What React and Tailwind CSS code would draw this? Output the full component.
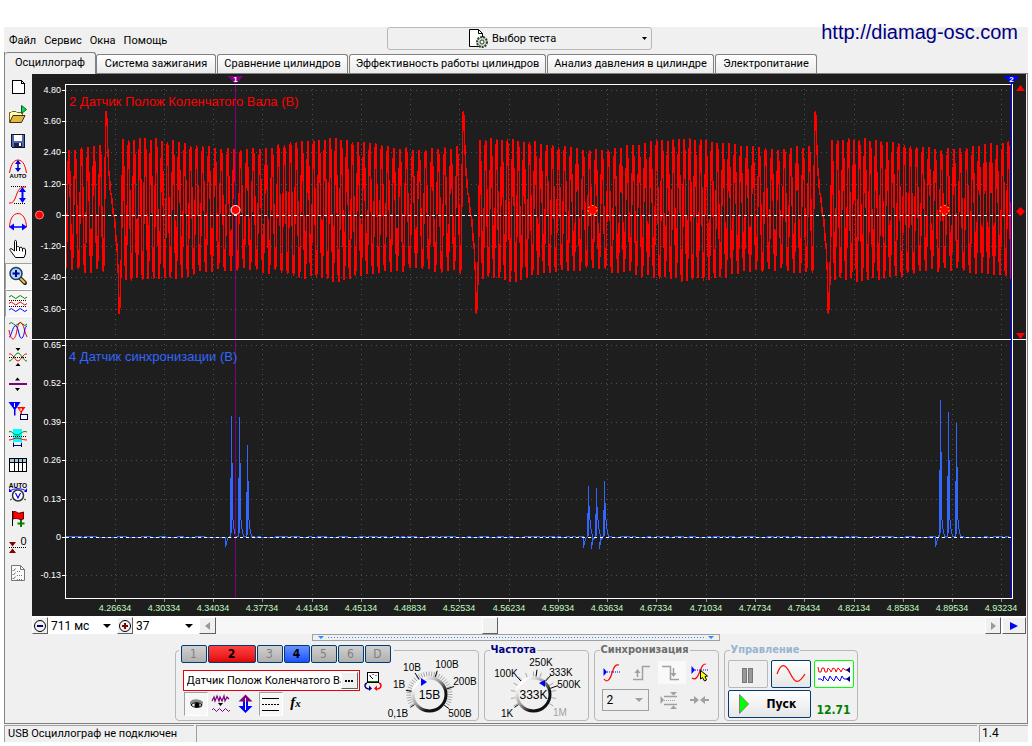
import React from "react";

/* ---------- signal data ---------- */
const ZERO1 = 215;
const ZERO2 = 537;

function noise(n) {
  const v = Math.sin(n * 12.9898 + 4.1) * 43758.5453;
  return v - Math.floor(v) - 0.5;
}

// Crankshaft sensor: 58 teeth per revolution followed by a two-tooth gap.
function crankPoints() {
  const spikes = [-247, 106.3, 463.4, 815.4, 1167];
  const pts = [];
  for (let r = 0; r < 4; r++) {
    const s = spikes[r];
    const e = spikes[r + 1];
    pts.push([s, 111], [s + 0.8, 122], [s + 1.6, 152], [s + 2.8, 175], [s + 4.5, 193], [s + 7.6, 215], [s + 10.5, 243]);
    pts.push([s + 11.6, 265], [s + 13, 313], [s + 14, 298], [s + 14.8, 262]);
    const start = s + 16.6;
    const weights = [];
    let sum = 0;
    for (let k = 0; k < 57; k++) {
      const w = 1 - 0.075 * Math.cos((2 * Math.PI * (k - 35)) / 31);
      weights.push(w);
      sum += w;
    }
    let x = start;
    for (let k = 0; k < 57; k++) {
      const step = (weights[k] / sum) * (e - start);
      const c = Math.cos((2 * Math.PI * (k - 35)) / 31);
      pts.push([x, 144 - c * 5 + noise(k + r * 70) * 3]);
      pts.push([x + step * 0.52, 274 + c * 5 + noise(k * 3 + r * 90) * 5]);
      x += step;
    }
  }
  return pts;
}

function crankPath() {
  const pts = crankPoints();
  let i = 0;
  const at = (x) => {
    while (i > 0 && pts[i][0] > x) i--;
    while (pts[i + 1][0] < x) i++;
    const [x0, y0] = pts[i];
    const [x1, y1] = pts[i + 1];
    const t = (x - x0) / (x1 - x0);
    return y0 + (y1 - y0) * ((1 - Math.cos(Math.PI * t)) / 2);
  };
  let d = "";
  for (let x = 66; x < 1011; x++) {
    let lo = 999;
    let hi = 0;
    for (let u = -0.25; u <= 1.25; u += 0.1) {
      const y = at(x + u);
      lo = Math.min(lo, y);
      hi = Math.max(hi, y);
    }
    d += `M${x + 0.5} ${Math.round(lo)}V${Math.round(hi) + 1}`;
  }
  return d;
}

function syncPath() {
  const pulse = (x, top) => [
    [x - 1.5, 537], [x - 1, 478 + (top - 416) * 0.5], [x - 0.5, 537], [x, top], [x + 0.6, 537 - (537 - top) * 0.55],
    [x + 1, 537 - (537 - top) * 0.5], [x + 1.5, 520], [x + 2.5, 529], [x + 4, 536],
  ];
  const groups = [
    [[225.5, 547], [231.5, 416], [239.5, 417], [247.5, 445]],
    [[583.5, 548], [588.5, 486], [596.5, 488], [604.5, 481]],
    [[935.5, 547], [940.5, 400], [948.5, 412], [956.5, 423]],
  ];
  let d = "M66 537.5";
  let x = 66;
  groups.forEach(([dip, ...pulses], g) => {
    for (; x < dip[0] - 3; x += 3) d += `V${noise(x) > 0.05 ? 536.5 : 537.5}H${x + 3}`;
    d += `H${dip[0]}V${dip[1]}L${dip[0] + 1} 543L${dip[0] + 2} 538.5`;
    pulses.forEach(([px, top]) => {
      if (g === 1 && px > 590) d += `L${px - 5} 549L${px - 4} 541`;
      pulse(px, top).forEach(([a, b]) => {
        d += `L${a} ${b}`;
      });
    });
    x = Math.round(pulses[2][0]) + 9;
    d += `L${x} 537.5`;
  });
  for (; x < 1010; x += 3) d += `V${noise(x) > 0.05 ? 536.5 : 537.5}H${x + 3}`;
  return d;
}

const CRANK = crankPath();
const SYNC = syncPath();
const ROWS1 = [["4.80", 90], ["3.60", 121], ["2.40", 152], ["1.20", 184], ["0", 215], ["-1.20", 246], ["-2.40", 277], ["-3.60", 309]];
const ROWS2 = [["0.65", 345], ["0.52", 383], ["0.39", 422], ["0.26", 460], ["0.13", 499], ["0", 537], ["-0.13", 575]];
const TIMES = Array.from({ length: 19 }, (_, i) => [(4.26634 + i * 0.037).toFixed(5), Math.round(114.5 + i * 49.27)]);

function Scope() {
  return (
    <svg viewBox="32 74 994 542" className="block h-auto w-full bg-[#1e1e1e]" fontFamily="'Liberation Sans', Arial, sans-serif" shapeRendering="crispEdges" role="img" aria-label="Осциллограмма">
      <rect x="32" y="74" width="994" height="542" fill="#1e1e1e" />
      <g stroke="#505050" strokeWidth="1" strokeDasharray="1 4">
        {[...ROWS1, ...ROWS2].map(([t, y]) => (
          <path key={t + y} d={`M66 ${y + 0.5}H1011`} />
        ))}
        {TIMES.map(([t, x]) => (
          <path key={t} d={`M${x + 0.5} 89V338M${x + 0.5} 344V597`} />
        ))}
      </g>
      <g stroke="#fff">
        {[...ROWS1, ...ROWS2].map(([t, y]) => (
          <path key={t + y} d={`M62 ${y + 0.5}H65`} />
        ))}
      </g>
      <g stroke="#909090">
        {TIMES.map(([t, x]) => (
          <path key={t} d={`M${x + 0.5} 599V602`} />
        ))}
      </g>
      <g fill="#fff" fontSize="9" textAnchor="end">
        {[...ROWS1, ...ROWS2].map(([t, y]) => (
          <text key={t + y} x="61" y={y + 3}>{t}</text>
        ))}
      </g>
      <g fill="#c0ffc0" fontSize="9" textAnchor="middle">
        {TIMES.map(([t, x]) => (
          <text key={t} x={x} y="611">{t}</text>
        ))}
      </g>
      <path d={CRANK} stroke="#f00" fill="none" />
      <path d={SYNC} stroke="#3366ff" fill="none" />
      <path d="M235.5 83V598" stroke="#800080" />
      <path d={`M66 ${ZERO1 + 0.5}H1011`} stroke="#fff" strokeDasharray="3 3" />
      <path d={`M66 ${ZERO2 + 0.5}H1011`} stroke="#fff" strokeDasharray="3 3" />
      <path d="M65.5 84V598.5H1012.5V84M65 84.5H1013M32 339.5H1026" stroke="#fff" fill="none" />
      <path d="M1011.5 83V598" stroke="#00f" />
      <path d="M228 76H243L235.5 84Z" fill="#800080" />
      <path d="M1004 76H1019L1011.5 84Z" fill="#00f" />
      <g fill="#fff" fontSize="8" fontWeight="bold" textAnchor="middle">
        <text x="235.5" y="82">1</text>
        <text x="1011.5" y="82">2</text>
      </g>
      <text x="69" y="106" fill="#f00" fontSize="13">2 Датчик Полож Коленчатого Вала (В)</text>
      <text x="69" y="361" fill="#3366ff" fontSize="13">4 Датчик синхронизации (В)</text>
      <g shapeRendering="auto" fill="#f00">
        <circle cx="39.5" cy="215" r="4" stroke="#ff8080" />
        <circle cx="235.5" cy="210" r="4.5" stroke="#fff" />
        {[592.5, 944.5].map((x) => (
          <g key={x}>
            <circle cx={x} cy="210" r="5" />
            <circle cx={x} cy="210" r="4.5" fill="none" stroke="#ff0" strokeDasharray="1.500 2.500" />
          </g>
        ))}
        <path d="M1016 91L1020.5 85L1025 91ZM1016 333L1020.5 339L1025 333ZM1020.5 207L1025 211.5L1020.5 216L1016 211.5Z" />
      </g>
    </svg>
  );
}

/* ---------- toolbar icons, 20x20 ---------- */
const Svg = ({ w = 20, h = 20, children, crisp }) => (
  <svg width={w} height={h} viewBox={`0 0 ${w} ${h}`} fill="none" className="block shrink-0" shapeRendering={crisp ? "crispEdges" : "auto"} aria-hidden="true">
    {children}
  </svg>
);
const wave = (y, a, x0 = 1, n = 3, w = 6) => {
  let d = `M${x0} ${y}`;
  for (let i = 0; i < n; i++) d += `q${w / 4} ${-a * 2} ${w / 2} 0t${w / 2} 0`;
  return d;
};

const TOOLS = [
  ["Новый", <Svg crisp><path d="M4.5 3.5H13.5L16.5 6.5V16.5H4.5Z" fill="#fff" stroke="#000" /><path d="M13.5 3.5V6.5H16.5" stroke="#000" /></Svg>],
  ["Открыть", <Svg><path d="M1.5 18V8.500H3L4 7.500H8L9 8.500H14.500V11" fill="#ffffb0" stroke="#806020" /><path d="M1.500 18.500L5 11.500H17L13.500 18.500Z" fill="#e0b840" stroke="#403010" /><path d="M13.500 1.500L18.500 5.500L13.500 9.500Z" fill="#00e050" stroke="#006020" /></Svg>],
  ["Сохранить", <Svg crisp><path d="M3.500 3.500H16.500V16.500H4.500L3.500 15.500Z" fill="#5068b0" stroke="#101030" /><rect x="6" y="4" width="8" height="6" fill="#fff" /><rect x="6" y="12" width="8" height="4" fill="#20204a" /><rect x="11" y="12" width="2" height="3" fill="#fff" /></Svg>],
  ["Авто амплитуда", <Svg><path d="M1.500 15C2.500 10 4 2 10 2S17.500 10 18.500 15" stroke="#f00" /><path d="M10 3V13" stroke="#0000d0" strokeWidth="1.500" /><path d="M7 6L10 2L13 6ZM7 10L10 14L13 10Z" fill="#0000d0" /><text x="10" y="20" fontSize="6" fontWeight="bold" fontFamily="Liberation Sans, sans-serif" textAnchor="middle" fill="#000">AUTO</text></Svg>],
  ["Размах", <Svg><path d="M3 1.500H18M6 18.500H18" stroke="#000" strokeDasharray="1 1" shapeRendering="crispEdges" /><path d="M1 18C9 20 7 3 15 2H18" stroke="#f00" /><path d="M14.500 4V16" stroke="#0000ff" strokeWidth="2" /><path d="M11 7L14.500 2L18 7ZM11 13L14.500 18L18 13Z" fill="#00f" /></Svg>],
  ["Период", <Svg><path d="M1.500 15C2 7 5 1.500 10 1.500S18 7 18.500 15" stroke="#f00" /><path d="M4 15H16" stroke="#00f" strokeWidth="1.500" /><path d="M6 11.500L1 15L6 18.500ZM14 11.500L19 15L14 18.500Z" fill="#00f" /></Svg>],
  ["Рука", <Svg><path d="M7.500 18.500L3 12.500C1 10 2 9 4 10L6.500 12V2.500C6.500 1 8.500 1 8.500 2.500V8.500C8.500 7 11.500 7 11.500 9C12 7.500 14.500 8 14.500 10C15 8.500 17.500 9 17.500 11V15L16 18.500Z" fill="#fff" stroke="#000" /><path d="M11.500 9V12M14.500 10V12.500M8.500 8V12" stroke="#000" /></Svg>],
  ["Лупа", <Svg><path d="M12 12L17 17" stroke="#302000" strokeWidth="4" strokeLinecap="round" /><path d="M12 12L17 17" stroke="#e0c060" strokeWidth="2" /><circle cx="8" cy="7.500" r="6" fill="#a8d8ff" stroke="#203858" strokeWidth="1.500" /><path d="M8 4V11M4.500 7.500H11.500" stroke="#000090" strokeWidth="2" /></Svg>],
  ["Раздельно", <Svg><path d={wave(4, 1.5, 1, 2, 9)} stroke="#008000" /><path d={wave(10.5, 1.5, 1, 2, 9)} stroke="#f00" /><path d={wave(17, 1.5, 1, 2, 9)} stroke="#00f" /><path d="M1 7.500H19M1 13.500H19" stroke="#000" strokeDasharray="1 1" shapeRendering="crispEdges" /></Svg>],
  ["Совместно", <Svg><path d={wave(4, 1.5, 1, 2, 9)} stroke="#008000" /><path d="M1 10C3 22 7 22 9 10S15 2 17 12L19 17" stroke="#f00" /><path d="M1 17C3 18 5 4 8 6S11 20 14 18S16 6 19 6" stroke="#00f" /></Svg>],
  ["Центрировать", <Svg><path d="M1 7C5 6 7 14 10 14S15 6 19 7" stroke="#f00" /><path d="M1 14C5 14 7 6 10 6S15 14 19 14" stroke="#008000" /><path d="M1 10.500H19" stroke="#000" strokeDasharray="1 1" shapeRendering="crispEdges" /><path d="M7.500 1H12.500L10 4ZM7.500 19H12.500L10 16Z" fill="#000" /></Svg>],
  ["Разделитель", <Svg><path d="M1 10H19" stroke="#800080" strokeWidth="2" /><path d="M7 6.500H12L9.500 3.500ZM7 14H12L9.500 17Z" fill="#000" /></Svg>],
  ["Маркеры", <Svg><path d="M9 6H17.500L14 11V16H12.500V11Z" fill="#f00" /><path d="M0.500 1H12.500L7.500 8.500V14.500H6V8.500Z" fill="#0000ff" /><path d="M6.500 2V6M11.500 8H14L12.500 10" stroke="#fff" /><rect x="12.500" y="13.500" width="7" height="5" fill="#fff" stroke="#000060" /></Svg>],
  ["Окно измерения", <Svg><rect x="5" y="1" width="9" height="13" fill="#00ffff" /><path d="M5.500 14V19M13.500 14V19" stroke="#00e0e0" /><path d="M1 4C4 2 5 7 9 7S14 2 19 4" stroke="#008000" /><path d="M1 12C4 12 6 10 9 10S14 12 19 12" stroke="#f00" /><path d="M1 8.500H19" stroke="#000" strokeDasharray="1 1" shapeRendering="crispEdges" /><path d="M5.500 15V19M13.500 15V19M6 17.500H13" stroke="#000080" /></Svg>],
  ["Таблица", <Svg crisp><rect x="1.500" y="3.500" width="17" height="13" fill="#fff" stroke="#000" /><rect x="2" y="4" width="16" height="3" fill="#99c8e8" /><path d="M2 7.500H18M6.500 4V16M10.500 4V16M14.500 4V16" stroke="#000" /></Svg>],
  ["Авто развёртка", <Svg><text x="10" y="5.500" fontSize="6.500" fontWeight="bold" fontFamily="Liberation Sans, sans-serif" textAnchor="middle" fill="#000">AUTO</text><path d="M2 9C6 6 14 6 18 9" stroke="#00f" /><path d="M1 6V10H4ZM19 6V10H16Z" fill="#00f" /><circle cx="10" cy="13.500" r="5.500" fill="#fff" stroke="#333" strokeWidth="1.500" /><path d="M7.500 11L10 16L12.500 11" stroke="#00f" strokeWidth="1.200" /><path d="M2 18L4 17M18 18L16 17" stroke="#333" /></Svg>],
  ["Добавить метку", <Svg><path d="M4.500 2V17" stroke="#000" /><path d="M5 3C8 1 9 5 12 4L15.500 3V10C12 12 10 8 5 10Z" fill="#f00" stroke="#600000" /><path d="M13 11V18M9.500 14.500H16.500" stroke="#008000" strokeWidth="2" /></Svg>],
  ["Обнулить", <Svg><path d="M1 11.500H19" stroke="#000" strokeDasharray="1 1" shapeRendering="crispEdges" /><path d="M1 6H8L4.500 10.500ZM1 17H8L4.500 12.500Z" fill="#800000" /><text x="15.500" y="9" fontSize="11" fontFamily="Liberation Sans, sans-serif" textAnchor="middle" fill="#000">0</text></Svg>],
  ["Отчёт", <Svg><path d="M3.500 2.500H12.500L16.500 6.500V17.500H3.500Z" fill="#fafafa" stroke="#777" /><path d="M12.500 2.500V6.500H16.500" stroke="#777" /><path d="M4.500 7L5.500 8L7.500 5.500M4.500 11L5.500 12L7.500 9.500M4.500 15L5.500 16L7.500 13.500" stroke="#777" /><path d="M9 8.500H13M9 12.500H15M9 16.500H15" stroke="#777" strokeDasharray="1 1" /></Svg>],
];

const Arrow = ({ className }) => (
  <svg width="8" height="4" viewBox="0 0 8 4" className={`pointer-events-none absolute ${className}`} fill="currentColor" aria-hidden="true"><path d="M0 0H8L4 4Z" /></svg>
);

const raised = "border border-t-white border-l-white border-b-[#606060] border-r-[#606060] bg-[#f0f0f0] flex items-center justify-center shrink-0";
const sunken = "border border-t-[#a0a0a0] border-l-[#a0a0a0] border-b-white border-r-white bg-[#f7f7f7]";
const flat = "border border-transparent";

/* ---------- knobs ---------- */
function Knob({ id, cx, cy, value, pointer, labels, ticks }) {
  return (
    <g fontFamily="'Liberation Sans', Arial, sans-serif">
      <defs>
        <linearGradient id={id} x1="0" y1="0" x2="1" y2="1">
          <stop offset="0.15" stopColor="#fff" />
          <stop offset="0.45" stopColor="#999" />
          <stop offset="0.7" stopColor="#111" />
        </linearGradient>
      </defs>
      {ticks.map(([deg, r, color]) => {
        const a = (deg * Math.PI) / 180;
        return <path key={`${deg}${color}`} d={`M${cx + 18 * Math.cos(a)} ${cy + 18 * Math.sin(a)}L${cx + r * Math.cos(a)} ${cy + r * Math.sin(a)}`} stroke={color} />;
      })}
      <circle cx={cx} cy={cy} r="16.500" fill="#f0f0f0" stroke={`url(#${id})`} strokeWidth="3" />
      <path d={pointer} fill="#00f" />
      <text x={cx} y={cy + 4} textAnchor="middle" fontSize="12" fill="#000">{value}</text>
      <g fontSize="10">
        {labels.map(([t, x, y, c]) => (
          <text key={t} x={x} y={y} fill={c || "#000"} textAnchor="middle">{t}</text>
        ))}
      </g>
    </g>
  );
}
const minor = (from, to, step, r) => {
  const out = [];
  for (let a = from; a <= to; a += step) out.push([a, r, "#a8a8a8"]);
  return out;
};

const CHANNELS = [["1", 0], ["2", 2], ["3", 0], ["4", 4], ["5", 0], ["6", 0], ["D", 0]];
const CHANNEL_STYLE = {
  0: "w-[26px] bg-linear-to-b from-[#d0d0d0] to-[#b0b0b0] text-[#808080]",
  2: "w-12 bg-linear-to-b from-[#ff4040] to-[#e00000] font-bold text-black",
  4: "w-[26px] bg-linear-to-b from-[#6a90ff] to-[#1a50ff] font-bold text-black",
};
const TABS = ["Система зажигания", "Сравнение цилиндров", "Эффективность работы цилиндров", "Анализ давления в цилиндре", "Электропитание"];
const SIDE = [
  ["Показать", true, <Svg w={22} h={20}><path d="M5 8C8 4 15 5 18 8L17 13C13 15 8 14 5 10Z" fill="#888" /><path d="M6 11C9 8 14 8 17 11C14 14 9 14 6 11Z" fill="#fff" stroke="#000" /><circle cx="12" cy="11" r="2.500" fill="#000" /></Svg>],
  ["Фильтр", false, <Svg><path d="M1 7L3 3L4 7L6 2L8 7L9 3L11 7L13 2L14 7L16 3L18 5" stroke="#800080" strokeWidth="1.200" /><path d="M7 9H12L9.500 12Z" fill="#000" /><path d={wave(16, 1.5, 1, 3, 6)} stroke="#800080" /></Svg>],
  ["Инверсия", false, <Svg><path d="M9.500 0.500L16.500 7.500H12V11H7V7.500H2.500Z" fill="#800080" /><path d="M9.500 19L16.500 12H12V8H7V12H2.500Z" fill="#00f" /><path d="M9.500 4V16" stroke="#fff" strokeWidth="1" /></Svg>],
  ["Линии", true, <Svg crisp><path d="M1 4.500H18M1 16.500H18" stroke="#000" /><path d="M1 10.500H18" stroke="#000" strokeDasharray="2 1" /></Svg>],
  ["Функция", false, <span className="pb-1 font-['Liberation_Serif',serif] text-[15px] leading-4 font-bold italic">f<span className="text-[11px]">x</span></span>],
];

function Panel({ title, color, className, children }) {
  return (
    <fieldset className={`h-[76px] rounded border border-[#b8b8b8] ${className}`}>
      <legend className={`ml-[5px] h-[10px] px-px text-[11px] leading-[10px] font-bold font-['DejaVu_Sans_Condensed','DejaVu_Sans',sans-serif] ${color}`}>{title}</legend>
      {children}
    </fieldset>
  );
}

export default function App() {
  return (
    <div className="relative min-w-[900px] bg-white px-1 pt-[27px] pb-1 font-[Roboto,'Liberation_Sans',sans-serif] text-[11px] text-black">
      <a href="http://diamag-osc.com" className="absolute top-[21px] right-[14px] font-['Liberation_Sans',Arial,sans-serif] text-[20px] leading-[22px] text-[#000080]">http://diamag-osc.com</a>
      <div className="bg-[#f0f0f0]">
        <header className="flex h-[25px] items-start">
          <nav className="flex w-[383px] gap-2 pt-1.5 pl-[5px] leading-4">
            {["Файл", "Сервис", "Окна", "Помощь"].map((m) => (
              <button key={m} type="button">{m}</button>
            ))}
          </nav>
          <button type="button" className="flex h-[23px] w-[265px] items-center rounded-[3px] border border-[#b8b8b8] pr-1 pl-20">
            <Svg w={21} h={21}>
              <path d="M1.500 1.500H10.500L14.500 5.500V18.500H1.500Z" fill="#fff" stroke="#000" />
              <path d="M10.500 1.500V5.500H14.500" stroke="#000" />
              <circle cx="14" cy="14" r="5" fill="#c8dcc8" stroke="#304030" strokeWidth="2" strokeDasharray="2 1" />
              <circle cx="14" cy="14" r="2" fill="#fff" stroke="#304030" />
            </Svg>
            <span className="ml-[3px] flex-1 pt-0.5 text-left">Выбор теста</span>
            <svg width="5" height="3" viewBox="0 0 5 3" aria-hidden="true"><path d="M0 0H5L2.500 3Z" /></svg>
          </button>
        </header>

        <div role="tablist" className="flex h-[22px] items-end border-l border-[#808080]">
          <button role="tab" aria-selected="true" type="button" className="h-[22px] w-[91px] rounded-t-[3px] border-t border-r border-[#808080] bg-[#f0f0f0]">Осциллограф</button>
          <div className="flex h-5 flex-1 gap-px border-b border-[#808080]">
            {TABS.map((t, i) => (
              <button key={t} role="tab" aria-selected="false" type="button" className={`rounded-t-[3px] border border-b-0 border-[#808080] bg-linear-to-b from-white to-[#ebebeb] ${["w-[120px]", "w-[131px]", "w-[197px]", "w-[167px]", "w-[102px]"][i]}`}>{t}</button>
            ))}
          </div>
        </div>

        <main className="border-r border-b border-l border-[#808080]">
          <div className="flex items-start">
            <div role="toolbar" className="flex w-[27px] shrink-0 flex-col">
              {TOOLS.map(([name, icon], i) => (
                <button key={name} type="button" aria-label={name} className={`h-[27px] w-[27px] p-0.5 pb-1 ${i === 7 || i === 8 ? sunken : flat}`}>{icon}</button>
              ))}
            </div>

            <div className="mr-px min-w-0 flex-1">
              <Scope />
              <div className="flex h-[18px] items-stretch bg-white pt-px">
                <button type="button" aria-label="Сжать" className={`w-4 ${raised}`}>
                  <Svg w={14} h={14}><circle cx="7" cy="7" r="5.500" stroke="#000" /><path d="M4 7H10" stroke="#000080" strokeWidth="2" /></Svg>
                </button>
                <div className="relative w-[69px]">
                  <select aria-label="Длительность" className="h-full w-full appearance-none bg-white pl-[3px] text-[12px] leading-4"><option>711 мс</option></select>
                  <Arrow className="top-[7px] right-1.5" />
                </div>
                <button type="button" aria-label="Растянуть" className={`w-4 ${raised}`}>
                  <Svg w={14} h={14}><circle cx="7" cy="7" r="5.500" stroke="#000" /><path d="M4 7H10M7 4V10" stroke="#800000" strokeWidth="2" /></Svg>
                </button>
                <div className="relative w-[66px]">
                  <select aria-label="Масштаб" className="h-full w-full appearance-none bg-white pl-[3px] text-[12px] leading-4"><option>37</option></select>
                  <Arrow className="top-[7px] right-1.5" />
                </div>
                <button type="button" aria-label="Влево" className={`w-[17px] ${raised}`}>
                  <Svg w={6} h={8}><path d="M5 0V8L0 4Z" fill="#999" /></Svg>
                </button>
                <input type="range" aria-label="Прокрутка" min="0" max="1000" defaultValue="353" className="m-0 h-full min-w-0 flex-1 appearance-none bg-[#f7f7f7] [&::-webkit-slider-thumb]:h-[17px] [&::-webkit-slider-thumb]:w-4 [&::-webkit-slider-thumb]:appearance-none [&::-webkit-slider-thumb]:border [&::-webkit-slider-thumb]:border-t-white [&::-webkit-slider-thumb]:border-r-[#606060] [&::-webkit-slider-thumb]:border-b-[#606060] [&::-webkit-slider-thumb]:border-l-white [&::-webkit-slider-thumb]:bg-[#f0f0f0]" />
                <button type="button" aria-label="Вправо" className={`w-4 ${raised}`}>
                  <Svg w={6} h={8}><path d="M1 0V8L6 4Z" fill="#999" /></Svg>
                </button>
                <button type="button" aria-label="Воспроизвести" className={`ml-px w-6 ${raised}`}>
                  <Svg w={8} h={8}><path d="M0 0V8L8 4Z" fill="#00f" /></Svg>
                </button>
              </div>
            </div>
          </div>

          <section className="flex flex-col items-center pb-0.5">
            <button type="button" aria-label="Свернуть панель" className="flex h-[7px] w-[408px] items-center justify-between border border-[#a0a0a0] px-[5px] text-[#1e90ff]">
              <svg width="6" height="3" viewBox="0 0 6 3" fill="currentColor"><path d="M0 0H6L3 3Z" /></svg>
              <svg height="1" className="mx-1 min-w-0 flex-1" stroke="currentColor" strokeDasharray="1 2" shapeRendering="crispEdges"><line x1="0" y1="0.5" x2="100%" y2="0.5" /></svg>
              <svg width="6" height="3" viewBox="0 0 6 3" fill="currentColor"><path d="M0 0H6L3 3Z" /></svg>
            </button>

            <div className="mt-1 flex items-start gap-[5px]">
              {/* channel */}
              <div className="mt-[5px] flex h-[71px] w-[304px] rounded border border-[#b8b8b8]">
                <div className="w-[210px] shrink-0 pl-[3px]">
                  <div className="-mt-[6px] flex w-[215px] bg-[#f0f0f0] pl-0.5">
                    {CHANNELS.map(([c, k]) => (
                      <button key={c} type="button" className={`mr-px h-[18px] shrink-0 rounded-[2px] border border-[#003c74] font-['DejaVu_Sans_Condensed',sans-serif] text-[12px] leading-4 last:mr-0 ${CHANNEL_STYLE[k]}`}>{c}</button>
                    ))}
                  </div>
                  <div className="mt-[7px] flex gap-[3px] pl-1">
                    <div className="flex h-[21px] w-[177px] items-center border border-red-600 bg-white p-px">
                      <input aria-label="Датчик" defaultValue="Датчик Полож Коленчатого Вала" className="min-w-0 flex-1 bg-white pl-0.5 text-[11px] leading-4 outline-none" />
                      <button type="button" aria-label="Выбрать датчик" className={`h-[17px] w-[17px] ${raised}`}>
                        <Svg w={9} h={2}><path d="M0 0H2V2H0ZM3 0H5V2H3ZM6 0H8V2H6Z" fill="#000" /></Svg>
                      </button>
                    </div>
                    <button type="button" aria-label="Подключение">
                      <Svg>
                        <rect x="4.500" y="1.500" width="11" height="10" fill="#fff" stroke="#000" />
                        <path d="M7 4V5M10 3V4M13 4V5M7 5L10 8" stroke="#000" />
                        <path d="M5 10H15V11H5Z" fill="#008000" />
                        <path d="M7 18C1 18 1 13 4 12" stroke="#000080" strokeWidth="1.500" />
                        <path d="M6 14.500V20L9 17.500Z" fill="#000080" />
                        <path d="M13 18C19 18 19 13 16 12" stroke="#f00" strokeWidth="1.500" />
                        <path d="M14 14.500V20L11 17.500Z" fill="#f00" />
                      </Svg>
                    </button>
                  </div>
                  <div className="mt-px flex gap-px pl-[5px]">
                    {SIDE.map(([name, on, icon]) => (
                      <button key={name} type="button" aria-label={name} className={`flex h-6 w-6 items-center justify-center ${on ? sunken : flat}`}>{icon}</button>
                    ))}
                  </div>
                </div>
                <svg width="92" height="69" viewBox="386 651 92 69" className="block shrink-0" fill="none" role="img" aria-label="Чувствительность 15В">
                  <Knob
                    id="k1" cx={429.5} cy={694.5} value="15В" pointer="M421 678V686L427 682Z"
                    ticks={[...minor(-210, 28, 7, 23), [146, 23, "#000"], [190, 24, "#000"], [236, 26, "#000"], [288, 25, "#000"], [342, 26, "#000"], [36, 24, "#000"]]}
                    labels={[["0,1В", 398, 717], ["1В", 399, 688], ["10В", 412, 671], ["100В", 447, 668], ["200В", 465, 685], ["500В", 460, 717]]}
                  />
                </svg>
              </div>

              <Panel title="Частота" color="text-[#000080]" className="w-[105px]">
                <svg width="103" height="65" viewBox="485 655 103 65" className="block" fill="none" role="img" aria-label="Частота 333K">
                  <Knob
                    id="k2" cx={533.5} cy={694.5} value="333K" pointer="M539 683L545 680V687Z"
                    ticks={[...minor(150, 390, 20, 23), [146, 23, "#000"], [227, 24, "#000"], [278, 25, "#000"], [312, 26, "#000"], [340, 26, "#000"]]}
                    labels={[["1K", 507, 717], ["100K", 506, 677], ["250K", 541, 666], ["333K", 561, 676], ["500K", 569, 688], ["1M", 560, 716, "#a0a0a0"]]}
                  />
                </svg>
              </Panel>

              <Panel title="Синхронизация" color="text-[#6d6d6d]" className="w-[125px]">
                <div className="grid grid-cols-[28px_28px_28px_28px] grid-rows-[24px_24px] items-center gap-y-1 pt-[5px] pl-[7px]">
                  <button type="button" aria-label="Уровень"><Svg><path d="M1.500 6V14L5 10Z" fill="#00f" /><path d="M5 10H18" stroke="#00f" strokeDasharray="1 1" /><path d="M2 17C5 21 8 18 10 11S14 2 17 3" stroke="#f00" strokeWidth="1.200" /></Svg></button>
                  <button type="button" aria-label="По фронту" className="text-[#a0a0a0]"><Svg><path d="M3 17.500H12.500V4.500H20" stroke="currentColor" strokeWidth="1.500" /><path d="M7.500 8V15" stroke="currentColor" strokeWidth="1.500" /><path d="M4.500 11L7.500 7L10.500 11Z" fill="currentColor" /></Svg></button>
                  <button type="button" aria-label="По спаду" className="h-[23px] bg-[#f9f9f9] pl-[3px] text-[#a0a0a0]"><Svg><path d="M1 4.500H9.500V17.500H18" stroke="currentColor" strokeWidth="1.500" /><path d="M12.500 6V14" stroke="currentColor" strokeWidth="1.500" /><path d="M9.500 11L12.500 15L15.500 11Z" fill="currentColor" /></Svg></button>
                  <button type="button" aria-label="Выбор уровня" className="pl-1"><Svg><path d="M1.500 4V12L5 8Z" fill="#00f" /><path d="M5 8H19" stroke="#00f" strokeDasharray="1 1" /><path d="M2 16C6 19 8 14 10 9S13 2 16 2" stroke="#f00" strokeWidth="1.200" /><path d="M10.500 8.500V17L12.500 15.500L14.500 19L16.500 18L15 14.500L17.500 14Z" fill="#ff0" stroke="#000" /></Svg></button>
                  <div className="relative col-span-2 mr-[9px] text-[#a0a0a0]">
                    <select aria-label="Канал синхронизации" className="block h-[22px] w-full appearance-none border border-[#a0a0a0] bg-[#f0f0f0] pl-1 text-[12px] text-black"><option>2</option></select>
                    <Arrow className="top-[9px] right-1.5" />
                  </div>
                  <button type="button" aria-label="Гистерезис" className="pl-px text-[#a0a0a0]"><Svg><path d="M1.500 6V14L5 10Z" fill="currentColor" /><path d="M5 10.500H17" stroke="currentColor" strokeDasharray="1 1" /><path d="M5 6.500H18M5 14.500H18" stroke="currentColor" strokeWidth="1.500" /><path d="M11 2H18L14.500 5.500ZM11 19H18L14.500 15.500Z" fill="currentColor" /></Svg></button>
                  <button type="button" aria-label="Сжатие" className="pl-1 text-[#a0a0a0]"><Svg><path d="M0 10H6M13 10H19" stroke="currentColor" strokeWidth="2" /><path d="M4 6L9 10L4 14ZM15 6L10 10L15 14Z" fill="currentColor" /></Svg></button>
                </div>
              </Panel>

              <Panel title="Управление" color="text-[#99b4d1]" className="w-[134px]">
                <div className="grid grid-cols-[40px_40px_40px] gap-x-[3px] gap-y-0.5 pt-[5px] pl-[3px]">
                  <button type="button" aria-label="Пауза" className="flex h-7 items-center justify-center rounded-[2px] border border-[#b8b8b8] pt-0.5">
                    <Svg w={11} h={15} crisp><path d="M0.500 0.500H4.500V14.500H0.500ZM6.500 0.500H10.500V14.500H6.500Z" fill="#999" stroke="#777" /></Svg>
                  </button>
                  <button type="button" aria-label="Синусоида" className="flex h-7 items-center justify-center rounded-[2px] border border-[#003c74] bg-linear-to-b from-white to-[#e6e6e6]">
                    <Svg w={30} h={20}><path d="M1 10C5 -1 9 -1 14 9S22 21 29 10" stroke="#f00" strokeWidth="1.200" /></Svg>
                  </button>
                  <button type="button" aria-label="Два канала" className="flex h-7 items-center justify-center rounded-[2px] border border-[#00ff00] bg-white">
                    <Svg w={34} h={18}>
                      <path d="M1 2L2 7H4L5 3L7 3L8 7H10L11 3L13 5L14 7L16 3L18 4L19 7L21 3L23 5L24 7L26 3L28 5H30" stroke="#f00" />
                      <path d="M1 14H4L6 16L7 11L9 14L11 16L13 11L15 14L17 16L19 11L21 14L23 16L25 11L27 14H30" stroke="#00f" />
                      <path d="M33 2V8L29 5ZM33 11V17L29 14Z" fill="#000080" />
                    </Svg>
                  </button>
                  <button type="button" className="col-span-2 flex h-7 items-center rounded-[2px] border border-[#003c74] bg-linear-to-b from-white to-[#e6e6e6] pl-2.5 font-['DejaVu_Sans_Condensed',sans-serif] text-[12px] font-bold">
                    <Svg w={10} h={20}><path d="M0.500 0.500L9.500 10L0.500 19.500Z" fill="#00ff00" stroke="#808080" /></Svg>
                    <span className="ml-[18px]">Пуск</span>
                  </button>
                  <output className="self-end text-center font-['DejaVu_Sans_Condensed',sans-serif] text-[12px] leading-4 font-bold text-[#008000]">12.71</output>
                </div>
              </Panel>
            </div>
          </section>
        </main>
      </div>

      <footer className="flex gap-0.5 bg-[#f0f0f0] pt-px leading-[15px] *:h-[17px] *:border-t *:border-l *:border-[#a0a0a0]">
        <div className="w-[190px] pl-[3px]">USB Осциллограф не подключен</div>
        <div className="flex-1" />
        <div className="w-[49px] pl-0.5 text-[12px]">1.4</div>
      </footer>
    </div>
  );
}
